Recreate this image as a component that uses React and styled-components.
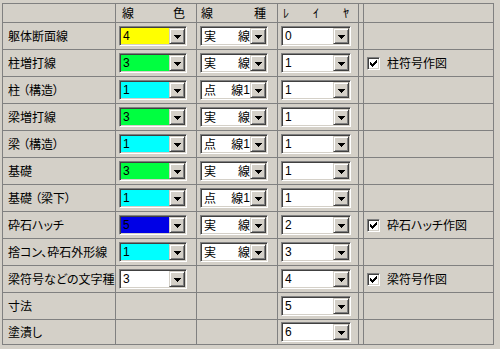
import React from 'react';
import styled, { createGlobalStyle } from 'styled-components';

const Global = createGlobalStyle`
  html, body { margin: 0; padding: 0; background: #d4d0c8; }
  body { font-family: "Noto Sans CJK JP", "Liberation Sans", sans-serif; font-size: 12px; color: #000; }
`;

const Page = styled.div`
  padding: 3px 0 0 2px;
`;

const Grid = styled.div`
  display: grid;
  width: fit-content;
  grid-template-columns: 112px 80px 80px 80px 4px 129px;
  grid-template-rows: 18px repeat(11, 26px) 24px;
  gap: 1px;
  background: #808080;
  border: 1px solid #808080;
`;

const Cell = styled.div`
  background: #d4d0c8;
  display: flex;
  align-items: center;
  padding-left: ${p => p.$pl ?? 3}px;
  min-width: 0;
  overflow: hidden;
`;

const HeadCell = styled(Cell)`
  justify-content: space-between;
  padding-right: ${p => p.$pr}px;
  line-height: 14px;
`;

const Label = styled.span`
  line-height: 14px;
  white-space: nowrap;
  font-feature-settings: ${p => (p.$palt ? '"palt"' : 'normal')};
`;

const Paren = styled.span`
  display: inline-block;
  width: 9px;
  text-align: ${p => (p.$open ? 'right' : 'left')};
  font-feature-settings: "palt";
`;

const ComboBox = styled.div`
  box-sizing: border-box;
  width: ${p => p.$w}px;
  height: 20px;
  display: flex;
  padding: 1px;
  border: 1px solid;
  border-color: #808080 #ffffff #ffffff #808080;
  box-shadow: inset 1px 1px #404040, inset -1px -1px #d4d0c8;
`;

const Field = styled.div`
  flex: 1;
  min-width: 0;
  overflow: hidden;
  background: ${p => p.$bg};
  padding-left: 2px;
  line-height: 16px;
  white-space: pre;
  display: flex;
  align-items: center;
`;

const Num = styled.span`
  font-family: "Liberation Sans", sans-serif;
  font-size: 12px;
`;

const Gap = styled.span`
  display: inline-block;
  width: ${p => p.$w}px;
`;

const DropButton = styled.div`
  box-sizing: border-box;
  width: 16px;
  height: 16px;
  flex: none;
  background: #d4d0c8;
  border: 1px solid;
  border-color: #d4d0c8 #404040 #404040 #d4d0c8;
  box-shadow: inset 1px 1px #ffffff, inset -1px -1px #808080;
  display: flex;
  align-items: center;
  justify-content: center;
`;

const CheckBox = styled.div`
  box-sizing: border-box;
  width: 13px;
  height: 13px;
  flex: none;
  background: #fff;
  border: 1px solid;
  border-color: #808080 #ffffff #ffffff #808080;
  box-shadow: inset 1px 1px #404040, inset -1px -1px #d4d0c8;
  display: flex;
  align-items: center;
  justify-content: center;
  margin-right: 7px;
`;

const Arrow = () => (
  <svg width="7" height="4" viewBox="0 0 7 4" style={{ display: 'block', marginTop: 1 }}>
    <path d="M0 0h7v1h-1v1h-1v1h-1v1h-1v-1h-1v-1h-1v-1h-1z" fill="#000" />
  </svg>
);

const Check = () => {
  const tops = [2, 3, 4, 3, 2, 1, 0];
  const d = tops.map((t, c) => `M${c} ${t}h1v3h-1z`).join('');
  return (
    <svg width="7" height="7" viewBox="0 0 7 7" style={{ display: 'block' }}>
      <path d={d} fill="#000" />
    </svg>
  );
};

const Combo = ({ w, bg = '#fff', children }) => (
  <ComboBox $w={w}>
    <Field $bg={bg}>{children}</Field>
    <DropButton><Arrow /></DropButton>
  </ComboBox>
);

const COLORS = {
  '1': '#00ffff',
  '3': '#00ff40',
  '4': '#ffff00',
  '5': '#0000e6',
};

const lineTypeContent = kind =>
  kind === 'solid' ? (
    <><span>実</span><Gap $w={23} /><span>線</span></>
  ) : (
    <><span>点</span><Gap $w={17} /><span>線</span><Num>1</Num></>
  );

const renderLabel = (label, palt) => {
  const m = label.match(/^(.*)（(.*)）$/);
  if (m) {
    return (
      <Label>
        {m[1]}<Paren $open>（</Paren>{m[2]}<Paren>）</Paren>
      </Label>
    );
  }
  return <Label $palt={palt}>{label}</Label>;
};

const rows = [
  { label: '躯体断面線', color: '4', type: 'solid', layer: '0' },
  { label: '柱増打線', color: '3', type: 'solid', layer: '1', check: '柱符号作図' },
  { label: '柱（構造）', color: '1', type: 'dot', layer: '1' },
  { label: '梁増打線', color: '3', type: 'solid', layer: '1' },
  { label: '梁（構造）', color: '1', type: 'dot', layer: '1' },
  { label: '基礎', color: '3', type: 'solid', layer: '1' },
  { label: '基礎（梁下）', color: '1', type: 'dot', layer: '1' },
  { label: '砕石ハッチ', color: '5', type: 'solid', layer: '2', check: '砕石ハッチ作図', palt: true },
  { label: '捨コン、砕石外形線', color: '1', type: 'solid', layer: '3', palt: true },
  { label: '梁符号などの文字種', color: '3', plain: true, layer: '4', check: '梁符号作図', palt: true },
  { label: '寸法', layer: '5' },
  { label: '塗潰し', layer: '6', palt: true },
];

export default function App() {
  return (
    <>
      <Global />
      <Page>
        <Grid>
          <Cell />
          <HeadCell $pl={6} $pr={11}><span>線</span><span>色</span></HeadCell>
          <HeadCell $pl={4} $pr={11}><span>線</span><span>種</span></HeadCell>
          <HeadCell $pl={5} $pr={9}><span>ﾚ</span><span>ｲ</span><span>ﾔ</span></HeadCell>
          <Cell />
          <Cell />
          {rows.map(r => (
            <React.Fragment key={r.label}>
              <Cell $pl={5}>{renderLabel(r.label, r.palt)}</Cell>
              <Cell>
                {r.color && (
                  <Combo w={68} bg={r.plain ? '#fff' : COLORS[r.color]}>
                    <Num>{r.color}</Num>
                  </Combo>
                )}
              </Cell>
              <Cell>
                {r.type && <Combo w={68}>{lineTypeContent(r.type)}</Combo>}
              </Cell>
              <Cell>
                <Combo w={70}><Num>{r.layer}</Num></Combo>
              </Cell>
              <Cell $pl={0} />
              <Cell>
                {r.check && (
                  <>
                    <CheckBox><Check /></CheckBox>
                    <Label $palt>{r.check}</Label>
                  </>
                )}
              </Cell>
            </React.Fragment>
          ))}
        </Grid>
      </Page>
    </>
  );
}
